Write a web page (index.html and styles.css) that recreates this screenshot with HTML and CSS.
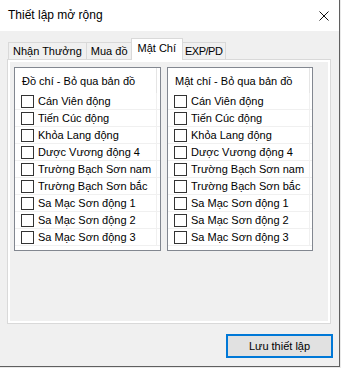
FILE: index.html
```html
<html>
  <head>
    <link rel="stylesheet" href="styles.css">
  </head>
  <body>
    <div class="window">
      <div class="titlebar">
        <span class="title">Thiết lập mở rộng</span>
        <svg class="close" width="10" height="10" viewBox="0 0 10 10">
          <path d="M0.5 0.5L9.5 9.5M9.5 0.5L0.5 9.5" stroke="#111" stroke-width="1" fill="none" />
        </svg>
      </div>

      <div class="content">
        <div class="tabs">
          <div class="tab">Nhận Thưởng</div>
          <div class="tab">Mua đồ</div>
          <div class="tab active">Mật Chí</div>
          <div class="tab narrow">EXP/PD</div>
        </div>

        <div class="panel">
          <div class="page">
            <div class="listview left">
              <div class="lv-header"><div class="lv-cell">Đồ chí - Bỏ qua bản đồ</div></div>
              <div class="lv-body" id="list-do-chi"></div>
            </div>
            <div class="listview right">
              <div class="lv-header"><div class="lv-cell">Mật chí - Bỏ qua bản đồ</div></div>
              <div class="lv-body" id="list-mat-chi"></div>
            </div>
          </div>
        </div>

        <div class="footer">
          <button class="save">Lưu thiết lập</button>
        </div>
      </div>
    </div>

    <script>
      const maps = [
        'Cán Viên động',
        'Tiến Cúc động',
        'Khỏa Lang động',
        'Dược Vương động 4',
        'Trường Bạch Sơn nam',
        'Trường Bạch Sơn bắc',
        'Sa Mạc Sơn động 1',
        'Sa Mạc Sơn động 2',
        'Sa Mạc Sơn động 3',
      ];

      function renderList(id) {
        const body = document.getElementById(id);
        maps.forEach((name) => {
          const row = document.createElement('div');
          row.className = 'lv-row';
          row.innerHTML = `
            <div class="lv-cell">
              <span class="check"></span>
              <span class="label">${name}</span>
            </div>
          `;
          body.appendChild(row);
        });
      }

      renderList('list-do-chi');
      renderList('list-mat-chi');
    </script>
  </body>
</html>
```

FILE: styles.css
```css
body {
  margin: 0;
  background-color: #e9e9e9;
  font-family: "Liberation Sans", Arial, sans-serif;
  font-size: 11px;
  color: #000;
}

.window {
  width: 340px;
  height: 367px;
  box-sizing: border-box;
  border-right: 1px solid #5f5f5f;
  border-bottom: 1px solid #5f5f5f;
  background-color: #f0f0f0;
  display: flex;
  flex-direction: column;
}

.titlebar {
  height: 31px;
  background-color: #fff;
  display: flex;
  align-items: center;
  padding-left: 8px;
  padding-right: 10px;
  flex-shrink: 0;
}

.title {
  flex: 1;
  font-size: 12px;
  padding-bottom: 1px;
}

.close {
  display: block;
}

.content {
  flex: 1;
  display: flex;
  flex-direction: column;
}

/* tabs */
.tabs {
  display: flex;
  align-items: flex-end;
  height: 21px;
  margin: 7px 0 0 8px;
}

.tab {
  height: 17px;
  line-height: 16px;
  box-sizing: border-box;
  padding: 0 4px;
  border: 1px solid #d9d9d9;
  border-bottom: 0;
  background-color: #f0f0f0;
  white-space: nowrap;
}

.tab + .tab {
  margin-left: -1px;
}

.tab.narrow {
  padding: 0 3px;
  letter-spacing: -0.5px;
}

.tab.active {
  position: relative;
  z-index: 1;
  height: 22px;
  line-height: 18px;
  padding: 0 6px;
  margin: 0 -2px -1px -2px;
  background-color: #fff;
}

.tab.active + .tab {
  margin-left: 0;
}

.panel {
  margin-left: 7px;
  width: 324px;
  height: 265px;
  box-sizing: border-box;
  border: 1px solid #d9d9d9;
  padding: 2px;
  background-color: #fff;
}

.page {
  height: 100%;
  box-sizing: border-box;
  background-color: #f0f0f0;
  padding: 5px 4px;
  display: flex;
  gap: 6px;
  align-items: flex-start;
}

/* list views */
.listview {
  height: 184px;
  box-sizing: border-box;
  border: 1px solid #828790;
  background-color: #fff;
}

.listview.left {
  width: 147px;
}

.listview.right {
  width: 146px;
}

.lv-header {
  height: 25px;
}

.lv-header .lv-cell {
  height: 100%;
  box-sizing: border-box;
  padding-left: 7px;
  display: flex;
  align-items: center;
  border-right: 1px solid #e5e5e5;
}

.lv-cell {
  width: 142px;
}

.lv-row {
  height: 17px;
  box-sizing: border-box;
  border-bottom: 1px solid #f0f0f0;
}

.lv-row .lv-cell {
  height: 100%;
  box-sizing: border-box;
  display: flex;
  align-items: center;
  border-right: 1px solid #f0f0f0;
}

.check {
  width: 13px;
  height: 13px;
  box-sizing: border-box;
  border: 1px solid #333;
  background-color: #fff;
  margin-left: 6px;
  margin-right: 4px;
  flex-shrink: 0;
}

.label {
  white-space: nowrap;
}

/* bottom button */
.footer {
  display: flex;
  justify-content: flex-end;
  padding: 10px 6px 0 0;
}

.save {
  width: 107px;
  height: 24px;
  border: 2px solid #0078d7;
  background-color: #e1e1e1;
  font-family: "Liberation Sans", Arial, sans-serif;
  font-size: 11px;
  color: #000;
  padding: 0;
}
```
